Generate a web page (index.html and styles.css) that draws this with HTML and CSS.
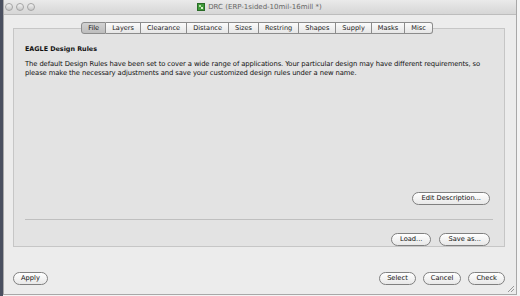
FILE: index.html
```html
<!DOCTYPE html>
<html>
<head>
<meta charset="utf-8">
<link rel="stylesheet" href="styles.css">
</head>
<body>
<div class="desk">
  <div class="window">
    <div class="titlebar">
      <div class="lights"><span class="light"></span><span class="light"></span><span class="light"></span></div>
      <div class="title">
        <svg class="ticon" width="8" height="8" viewBox="0 0 8 8"><rect x="0.5" y="0.5" width="7" height="7" fill="#3f9a3a" stroke="#2a6b27"/><rect x="2" y="2" width="2" height="2" fill="#b8e0a8"/><rect x="4" y="4" width="2" height="2" fill="#d8f0c8"/></svg>
        <span>DRC (ERP-1sided-10mil-16mill *)</span>
      </div>
    </div>
    <div class="content">
      <div class="tabs">
        <span class="tab active">File</span><span class="tab">Layers</span><span class="tab">Clearance</span><span class="tab">Distance</span><span class="tab">Sizes</span><span class="tab">Restring</span><span class="tab">Shapes</span><span class="tab">Supply</span><span class="tab">Masks</span><span class="tab">Misc</span>
      </div>
      <div class="panel">
        <div class="heading">EAGLE Design Rules</div>
        <p class="desc">The default Design Rules have been set to cover a wide range of applications. Your particular design may have different requirements, so please make the necessary adjustments and save your customized design rules under a new name.</p>
        <div class="spacer"></div>
        <div class="row"><button class="btn">Edit Description...</button></div>
        <div class="sep"></div>
        <div class="row gap"><button class="btn">Load...</button><button class="btn">Save as...</button></div>
      </div>
      <div class="footer">
        <button class="btn">Apply</button>
        <div class="right"><button class="btn">Select</button><button class="btn">Cancel</button><button class="btn">Check</button></div>
      </div>
    </div>
    <svg class="grip" width="9" height="9" viewBox="0 0 9 9"><path d="M8 2 L2 8 M8 5 L5 8" stroke="#999" stroke-width="1"/></svg>
  </div>
</div>
</body>
</html>
```

FILE: styles.css
```css
* { box-sizing: border-box; }
html, body { margin: 0; padding: 0; }
body {
  width: 520px;
  height: 296px;
  overflow: hidden;
  font-family: "DejaVu Sans", "Liberation Sans", sans-serif;
  font-size: 7px;
  color: #111;
  background: #f4f4f4;
}
.desk {
  height: 296px;
  padding-left: 3px;
  background: linear-gradient(90deg, #4a5060 0, #4a5060 3px, #f4f4f4 3px);
}
.window {
  position: relative;
  width: 514px;
  height: 295px;
  background: #ececec;
  border: 1px solid #a8a8a8;
  border-top: none;
  display: flex;
  flex-direction: column;
}
.titlebar {
  height: 15px;
  background: linear-gradient(#eaeaea, #d6d6d6);
  border-bottom: 1px solid #bdbdbd;
  display: flex;
  align-items: center;
  position: relative;
}
.lights { display: flex; gap: 3px; padding-left: 1px; }
.light {
  width: 8px; height: 8px; border-radius: 50%;
  background: linear-gradient(#f2f2f2, #c8c8c8);
  border: 1px solid #a4a4a4;
}
.title {
  flex: 1;
  display: flex;
  justify-content: center;
  align-items: center;
  gap: 3px;
  color: #666;
  font-size: 7px;
  margin-right: 32px;
}
.content {
  flex: 1;
  display: flex;
  flex-direction: column;
  padding: 7px 11px 0 9px;
}
.tabs {
  display: flex;
  justify-content: center;
  margin-bottom: -6px;
  position: relative;
  z-index: 1;
  padding-right: 4px;
}
.tab {
  height: 12px;
  line-height: 11px;
  padding: 0 6px;
  border: 1px solid #8c8c8c;
  border-left: none;
  background: linear-gradient(#fbfbfb, #e6e6e6);
  font-size: 6.6px;
  color: #1a1a1a;
}
.tab:first-child { border-left: 1px solid #8c8c8c; border-radius: 3px 0 0 3px; }
.tab:last-child { border-radius: 0 3px 3px 0; }
.tab.active { background: linear-gradient(#d2d2d2, #bdbdbd); }
.panel {
  height: 219px;
  background: #e3e3e3;
  border: 1px solid #c6c6c6;
  padding: 16px 11px 0 11px;
  display: flex;
  flex-direction: column;
}
.heading { font-weight: bold; font-size: 6.4px; }
.desc { margin: 7px 0 0 0; line-height: 9px; font-size: 6.8px; letter-spacing: -0.1px; }
.spacer { flex: 1; }
.row { display: flex; justify-content: flex-end; padding-right: 3px; }
.row.gap { gap: 8px; }
.sep { height: 1px; background: #bfbfbf; margin: 14px 0 13px; }
.btn {
  font-family: inherit;
  font-size: 6.7px;
  height: 13px;
  padding: 0 8px;
  border: 1px solid #808080;
  border-radius: 7px;
  background: linear-gradient(#ffffff, #e8e8e8);
  color: #111;
  line-height: 11px;
}
.footer {
  display: flex;
  justify-content: space-between;
  align-items: flex-start;
  height: 46px;
  padding-top: 25px;
  padding-right: 0;
}
.footer .btn { padding: 0 7px; }
.right { display: flex; gap: 7px; }
.grip { position: absolute; right: 1px; bottom: 1px; }
```
